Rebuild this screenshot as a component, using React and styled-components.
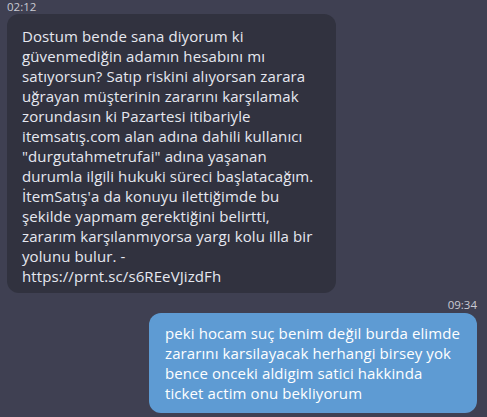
import React from "react";
import styled, { createGlobalStyle } from "styled-components";

const Global = createGlobalStyle`
  html, body { margin: 0; padding: 0; background: #3f4052; }
  body { width: 487px; height: 417px; overflow: hidden; font-family: "Open Sans", "Noto Sans", sans-serif; }
`;

const Page = styled.div`
  width: 487px;
  height: 417px;
  box-sizing: border-box;
  padding: 0 10px 0 4px;
  display: flex;
  flex-direction: column;
  background: #3f4052;
`;

const Group = styled.div`
  display: flex;
  flex-direction: column;
  align-items: ${(p) => (p.$mine ? "flex-end" : "flex-start")};
`;

const Time = styled.div`
  font-family: "Open Sans", "Liberation Sans", sans-serif;
  font-size: 11.5px;
  line-height: 14px;
  color: #c9cad3;
  margin: ${(p) => (p.$mine ? "5px 0 1px 0" : "0 0 0 3px")};
`;

const Bubble = styled.div`
  box-sizing: border-box;
  width: ${(p) => p.$w}px;
  margin-left: ${(p) => (p.$mine ? "0" : "3px")};
  padding: ${(p) => (p.$mine ? "10px 8px 10px 16px" : "12px 8px 7px 15px")};
  border-radius: 12px;
  background: ${(p) => (p.$mine ? "#5e9bd3" : "#31323f")};
  color: ${(p) => (p.$mine ? "#ffffff" : "#e6e8f0")};
  font-size: 15px;
  letter-spacing: 0.1px;
  line-height: 20px;
  white-space: nowrap;
`;

const Line = styled.div``;

const left = [
  "Dostum bende sana diyorum ki",
  "güvenmediğin adamın hesabını mı",
  "satıyorsun? Satıp riskini alıyorsan zarara",
  "uğrayan müşterinin zararını karşılamak",
  "zorundasın ki Pazartesi itibariyle",
  "itemsatış.com alan adına dahili kullanıcı",
  "\"durgutahmetrufai\" adına yaşanan",
  "durumla ilgili hukuki süreci başlatacağım.",
  "İtemSatış'a da konuyu ilettiğimde bu",
  "şekilde yapmam gerektiğini belirtti,",
  "zararım karşılanmıyorsa yargı kolu illa bir",
  "yolunu bulur. -",
  "https://prnt.sc/s6REeVJizdFh",
];

const right = [
  "peki hocam suç benim değil burda elimde",
  "zararını karsilayacak herhangi birsey yok",
  "bence onceki aldigim satici hakkinda",
  "ticket actim onu bekliyorum",
];

export default function App() {
  return (
    <Page>
      <Global />
      <Group>
        <Time>02:12</Time>
        <Bubble $w={329}>
          {left.map((l, i) => (
            <Line key={i}>{l}</Line>
          ))}
        </Bubble>
      </Group>
      <Group $mine>
        <Time $mine>09:34</Time>
        <Bubble $mine $w={328}>
          {right.map((l, i) => (
            <Line key={i}>{l}</Line>
          ))}
        </Bubble>
      </Group>
    </Page>
  );
}
